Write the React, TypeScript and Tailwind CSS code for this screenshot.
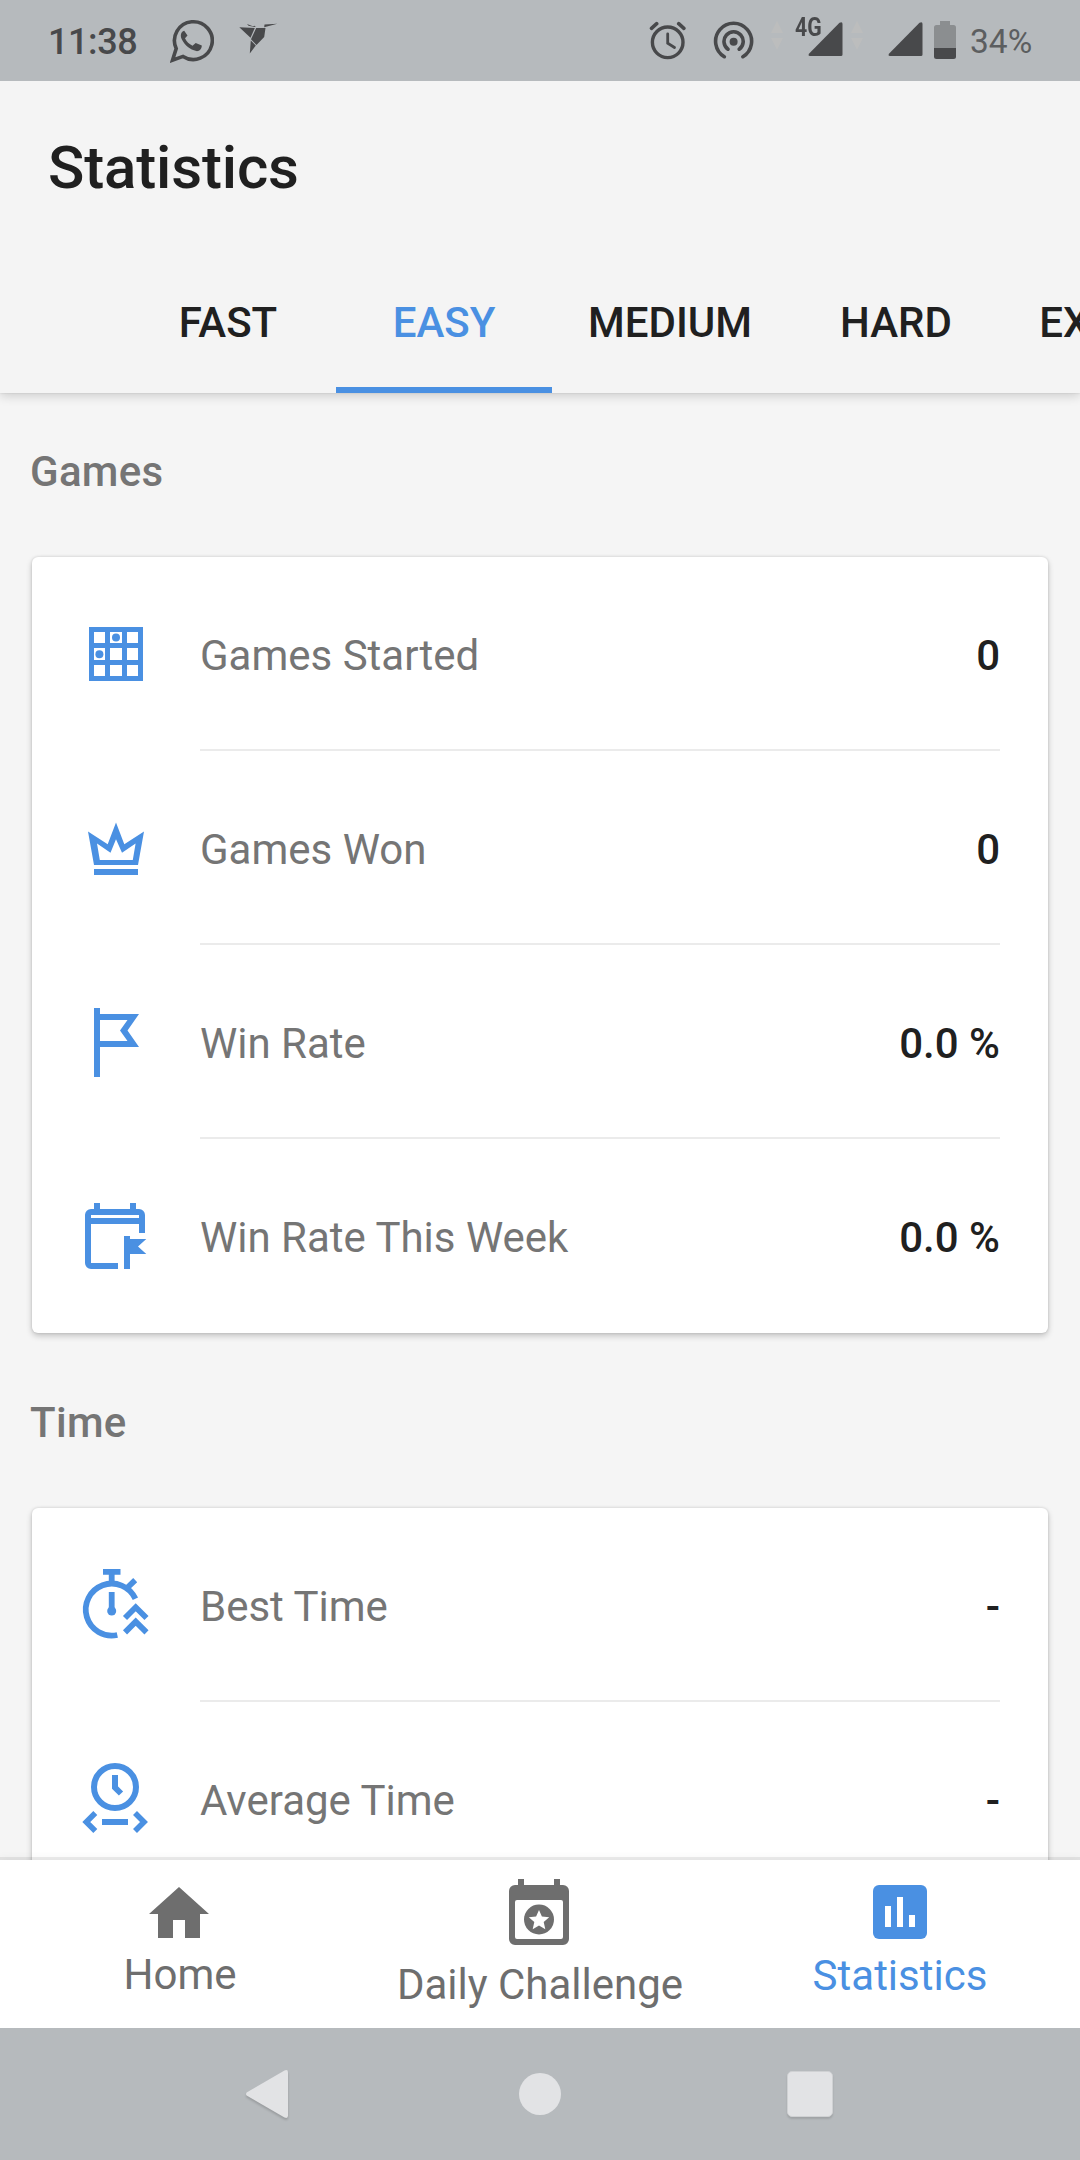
import type { ReactNode } from "react";

const BLUE = "#4a90e2";
const DARK = "#48494b";
const GREY = "#6e6e6e";

function GridIcon() {
  return (
    <svg width="72" height="72" viewBox="0 0 72 72" fill={BLUE}>
      <path
        fillRule="evenodd"
        d="M9 9H63V63H9ZM14 14V25H25V14ZM30 14V25H42V14ZM47 14V25H58V14ZM14 30V42H25V30ZM30 30V42H42V30ZM47 30V42H58V30ZM14 47V58H25V47ZM30 47V58H42V47ZM47 47V58H58V47Z"
      />
      <circle cx="36" cy="19.5" r="4" />
      <circle cx="19.4" cy="36.3" r="4" />
    </svg>
  );
}

function CrownIcon() {
  return (
    <svg width="72" height="72" viewBox="0 0 72 72" fill={BLUE}>
      <path
        fillRule="evenodd"
        d="M8 19.5L27.7 32.3L36 10.5L44.3 32.3L64 19.5L58 53H14ZM17 31.5L19.8 48H52.8L55.6 31.5L42 40.7L36 27.3L30.5 40.7Z"
      />
      <path d="M14 57H58V63H14Z" />
    </svg>
  );
}

function FlagIcon() {
  return (
    <svg width="72" height="72" viewBox="0 0 72 72" fill={BLUE}>
      <path
        fillRule="evenodd"
        d="M14 2H20V8H59L47.5 24.5L59 41H20V71H14ZM20 14V35H47.5L40 24.5L47.5 14Z"
      />
    </svg>
  );
}

function WeekIcon() {
  return (
    <svg width="72" height="72" viewBox="0 0 72 72" fill={BLUE}>
      <path
        fillRule="evenodd"
        d="M14 3H20V9H50V3H56V9H59A6 6 0 0 1 65 15V33H59V24H11V63H38V69H11A6 6 0 0 1 5 63V15A6 6 0 0 1 11 9H14ZM11 15V18H59V15Z"
      />
      <path d="M44 36H50V39H66.3L58 46.5L66.3 54H50V69H44Z" />
    </svg>
  );
}

function StopwatchIcon() {
  return (
    <svg width="72" height="72" viewBox="0 0 72 72" fill="none" stroke={BLUE} strokeWidth="5.8">
      <path d="M23 2.9H40.5M31.7 3V13M47 19L55.2 11.2" />
      <path d="M55.4 29.8A26 26 0 1 0 37.3 66" />
      <path d="M31.7 23V42" />
      <circle cx="31.7" cy="42" r="4.5" fill={BLUE} stroke="none" />
      <path d="M45 49L55.7 38.3L66.5 49M45 63.4L55.7 52.7L66.5 63.4" />
    </svg>
  );
}

function AverageIcon() {
  return (
    <svg width="72" height="72" viewBox="0 0 72 72" fill="none" stroke={BLUE} strokeWidth="6">
      <circle cx="35" cy="24" r="21" />
      <path d="M35 12V24.5L41 30.5M22 59H48" />
      <path d="M15.3 50L6.3 59L15.3 68M55 50L64 59L55 68" strokeWidth="5.6" />
    </svg>
  );
}

function Signal() {
  return (
    <svg width="35" height="35" viewBox="0 0 35 35" fill={DARK}>
      <path d="M31.5 .8Q34.5 -1 34.5 2V32.5Q34.5 34 33 34H2Q-.5 34 1.2 31.5Z" />
    </svg>
  );
}

function DataArrows() {
  return (
    <svg width="12" height="30" viewBox="0 0 12 30" fill="#bcbdbd">
      <path d="M6 0L12 12H0ZM6 29L0 17H12Z" />
    </svg>
  );
}

function StatusBar() {
  return (
    <div className="relative z-20 flex h-[81px] shrink-0 items-start bg-[#b6babd] text-[#48494b]">
      <span className="ml-[48px] mt-[21px] w-[122px] text-[36px] leading-[43px] font-medium tracking-[-0.4px]">11:38</span>
      <svg className="mt-[19px]" width="44" height="44" viewBox="0 0 44 44">
        <path d="M6.2 29.5A18.9 18.9 0 1 1 13 37.4L2.5 41.2Z" fill="none" stroke={DARK} strokeWidth="3.6" />
        <path
          d="M14.2 11.8C10.6 12.8 10 17 12 20.8C15 26.5 20 30.6 26.3 32.1C29.4 32.4 31.8 30.3 31.8 26.6L25.7 24L22.5 26.7C19 25 16.7 22.7 15 19.2L17.5 16.5Z"
          fill={DARK}
        />
      </svg>
      <svg className="ml-[25px] mt-[22px]" width="40" height="34" viewBox="0 0 40 34" fill={DARK}>
        <path d="M0.3 5.2L15.8 6L11.5 15.8ZM17.2 6H26.5L25.2 15L17.5 23L12 17.3ZM11.8 18.5L16.8 23.5L10.8 31.5ZM8 2L15.8 4.9L9.5 3.8ZM25.5 2.5L38.3 1.8L25.2 5.2ZM13 4.8L15.5 3.7L16.8 5Z" />
      </svg>
      <svg className="ml-[370px] mt-[21px]" width="38" height="40" viewBox="0 0 38 40" fill="none" stroke={DARK} strokeLinecap="round">
        <circle cx="18.7" cy="21.3" r="15.3" strokeWidth="3.4" />
        <path d="M18.7 13V22.3L25.5 26.5" strokeWidth="2.8" />
        <path d="M2.5 7.3L7.7 2.7M34.9 7.3L29.7 2.7" strokeWidth="3.6" />
      </svg>
      <svg className="ml-[26px] mt-[20px]" width="42" height="42" viewBox="0 0 42 42" fill="none" stroke={DARK} strokeWidth="3.6" strokeLinecap="round">
        <circle cx="20.6" cy="21.7" r="4" fill={DARK} stroke="none" />
        <path d="M15 29.2A9.6 9.6 0 1 1 26.2 29.2M11.3 36.7A18 18 0 1 1 29.9 36.7" />
      </svg>
      <div className="ml-[16px] mt-[21px]"><DataArrows /></div>
      <span className="ml-[12px] mt-[14px] w-[14px] text-[25px] leading-[28px] font-bold">
        <span className="inline-block origin-left scale-x-[0.85]">4G</span>
      </span>
      <div className="-ml-px mt-[22px]"><Signal /></div>
      <div className="ml-[8px] mt-[21px]"><DataArrows /></div>
      <div className="ml-[25px] mt-[22px]"><Signal /></div>
      <svg className="ml-[11px] mt-[21px]" width="22" height="38" viewBox="0 0 22 38">
        <path d="M6 0H16V4H19.5Q22 4 22 6.5V27H0V6.5Q0 4 2.5 4H6Z" fill="#8b8e90" />
        <path d="M0 27H22V35.5Q22 38 19.5 38H2.5Q0 38 0 35.5Z" fill={DARK} />
      </svg>
      <span className="ml-[14px] mt-[21px] text-[33.5px] leading-[41px] text-[#5c5e60]">34%</span>
    </div>
  );
}

const tabs = [
  { name: "FAST", width: "w-[216px]" },
  { name: "EASY", width: "w-[216px]", active: true },
  { name: "MEDIUM", width: "w-[236px]" },
  { name: "HARD", width: "w-[216px]" },
  { name: "EXPERT", width: "w-[222px]" },
];

function Header() {
  return (
    <header className="relative z-10 h-[312px] shrink-0 bg-[#f4f4f4] shadow-[0_3px_10px_rgba(0,0,0,0.16),0_0_2px_rgba(0,0,0,0.12)]">
      <h1 className="h-[168px] pt-[52px] pl-[48px] text-[60px] leading-[70px] font-medium tracking-[-0.15px] text-[#202020]">Statistics</h1>
      <nav className="flex h-[144px] overflow-hidden pl-[120px]">
        {tabs.map((t) => (
          <div
            key={t.name}
            className={`${t.width} flex shrink-0 justify-center border-b-[6px] pt-[49px] text-[42px] leading-[50px] font-medium ${
              t.active ? "border-[#4a90e2] text-[#4a90e2]" : "border-transparent text-[#202020]"
            }`}
          >
            {t.name}
          </div>
        ))}
      </nav>
    </header>
  );
}

type Stat = { label: string; value: string; icon: ReactNode };

function StatCard({ items }: { items: Stat[] }) {
  return (
    <div className="mx-[32px] rounded-[6px] bg-white shadow-[0_3px_6px_rgba(0,0,0,0.2),0_0_3px_rgba(0,0,0,0.14)]">
      {items.map((s, i) => (
        <div key={s.label} className="flex h-[194px] pl-[48px]">
          <div className="mt-[61px] w-[120px]">{s.icon}</div>
          <div
            className={`flex w-[800px] justify-between pt-[74px] text-[42px] leading-[50px] ${
              i < items.length - 1 ? "border-b-2 border-[#ebebeb]" : ""
            }`}
          >
            <span className="text-[#757575]">{s.label}</span>
            <span className="font-medium text-[#202020]">{s.value}</span>
          </div>
        </div>
      ))}
    </div>
  );
}

const games: Stat[] = [
  { label: "Games Started", value: "0", icon: <GridIcon /> },
  { label: "Games Won", value: "0", icon: <CrownIcon /> },
  { label: "Win Rate", value: "0.0 %", icon: <FlagIcon /> },
  { label: "Win Rate This Week", value: "0.0 %", icon: <WeekIcon /> },
];

const times: Stat[] = [
  { label: "Best Time", value: "-", icon: <StopwatchIcon /> },
  { label: "Average Time", value: "-", icon: <AverageIcon /> },
];

function SectionTitle({ children }: { children: ReactNode }) {
  return <h2 className="pl-[30px] text-[42px] leading-[50px] font-medium tracking-[0.3px] text-[#757575]">{children}</h2>;
}

function BottomNav() {
  const item = "flex w-[360px] flex-col items-center text-[42px] leading-[50px]";
  return (
    <nav className="relative z-10 flex h-[168px] shrink-0 bg-white shadow-[0_-3px_0_rgba(0,0,0,0.07),0_-3px_8px_rgba(0,0,0,0.04)]">
      <div className={`${item} pt-[18px] text-[#6e6e6e]`}>
        <svg className="-ml-[2px]" width="72" height="72" viewBox="0 0 24 24" fill={GREY}>
          <path d="M10 20v-6h4v6h5v-8h3L12 3 2 12h3v8z" />
        </svg>
        <span>Home</span>
      </div>
      <div className={`${item} pt-[19px] text-[#6e6e6e]`}>
        <svg className="-ml-[2px]" width="60" height="66" viewBox="0 0 60 66">
          <path
            fillRule="evenodd"
            fill={GREY}
            d="M9 0H15V6H45V0H51V6H54A6 6 0 0 1 60 12V60A6 6 0 0 1 54 66H6A6 6 0 0 1 0 60V12A6 6 0 0 1 6 6H9ZM8 21Q6 21 6 23V58Q6 60 8 60H52Q54 60 54 58V23Q54 21 52 21Z"
          />
          <circle cx="30" cy="40.5" r="15" fill={GREY} />
          <path d="M30 31L32.9 37.6L40.2 38.3L34.7 43.1L36.3 50.3L30 46.5L23.7 50.3L25.3 43.1L19.8 38.3L27.1 37.6Z" fill="white" />
        </svg>
        <span className="mt-[15px]">Daily Challenge</span>
      </div>
      <div className={`${item} pt-[25px] text-[#4a90e2]`}>
        <svg width="54" height="54" viewBox="0 0 54 54">
          <rect width="54" height="54" rx="6" fill={BLUE} />
          <path d="M12 21H18V42H12ZM24 12H30V42H24ZM36 30H42V42H36Z" fill="white" />
        </svg>
        <span className="mt-[12px]">Statistics</span>
      </div>
    </nav>
  );
}

function SystemNav() {
  return (
    <div className="relative z-20 flex h-[132px] shrink-0 items-center justify-between bg-[#b6babd] pr-[247px] pl-[242px]">
      <svg className="drop-shadow-[0_2px_1px_rgba(0,0,0,0.16)]" width="50" height="52" viewBox="0 0 50 52" fill="#e2e3e5">
        <path d="M5 24.2L42.5 2.5Q46 1 46 4.5V47.5Q46 51 42.5 49.5L5 27.8Q3 26 5 24.2Z" />
      </svg>
      <div className="size-[42px] rounded-full bg-[#e2e3e5]" />
      <div className="h-[46px] w-[46px] rounded-[5px] border border-[#cfd1d3] bg-[#e2e3e5] shadow-[0_2px_2px_rgba(0,0,0,0.12)]" />
    </div>
  );
}

export default function App() {
  return (
    <div className="flex h-[2160px] w-[1080px] flex-col overflow-hidden bg-[#f5f5f5] font-[Roboto,sans-serif]">
      <StatusBar />
      <Header />
      <main className="min-h-0 flex-1 overflow-hidden pt-[54px]">
        <SectionTitle>Games</SectionTitle>
        <div className="h-[60px]" />
        <StatCard items={games} />
        <div className="h-[65px]" />
        <SectionTitle>Time</SectionTitle>
        <div className="h-[60px]" />
        <StatCard items={times} />
      </main>
      <BottomNav />
      <SystemNav />
    </div>
  );
}
